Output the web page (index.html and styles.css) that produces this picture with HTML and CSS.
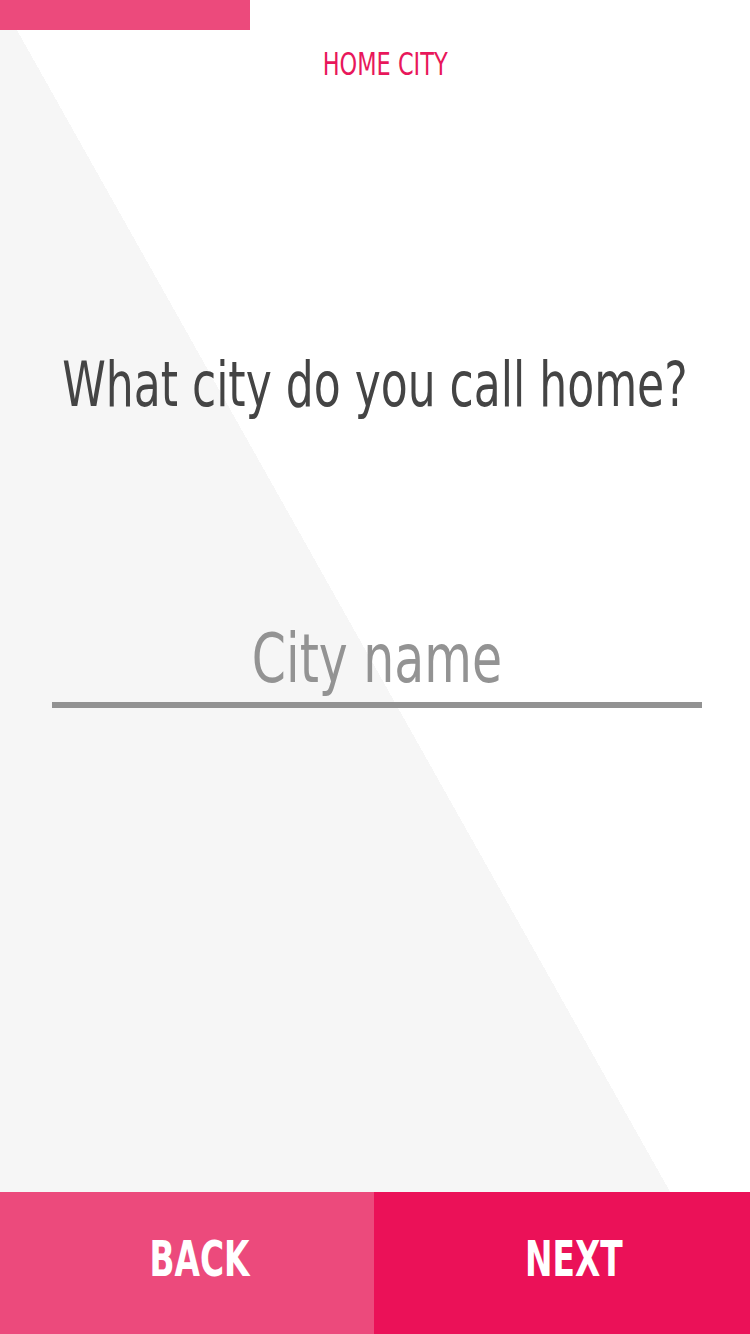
FILE: index.html
```html
<!DOCTYPE html>
<html lang="en">
<head>
<meta charset="utf-8">
<title>Home city</title>
<link rel="stylesheet" href="styles.css">
</head>
<body>
<div class="screen">
  <div class="progress"><div class="progress-fill"></div></div>
  <header class="title"><span class="narrow narrow-title">HOME CITY</span></header>
  <main class="content">
    <h1 class="question"><span class="narrow narrow-question">What city do you call home?</span></h1>
    <div class="field">
      <input class="field-input" type="text" placeholder="City name">
    </div>
  </main>
  <footer class="actions">
    <button class="btn btn-back" type="button"><span class="narrow narrow-btn">BACK</span></button>
    <button class="btn btn-next" type="button"><span class="narrow narrow-btn">NEXT</span></button>
  </footer>
</div>
</body>
</html>
```

FILE: styles.css
```css
html, body {
  margin: 0;
  padding: 0;
}
body {
  width: 750px;
  height: 1334px;
  overflow: hidden;
  background: linear-gradient(to top right, #f6f6f6 50%, #ffffff 50%);
  font-family: "DejaVu Sans Condensed", "DejaVu Sans", sans-serif;
}
.screen {
  height: 1334px;
  display: flex;
  flex-direction: column;
}
.narrow {
  display: inline-block;
  white-space: nowrap;
  transform-origin: center center;
}
.narrow-title { transform: scaleX(0.78); }
.narrow-question { transform: scaleX(0.79); }
.narrow-btn { transform: scaleX(0.73); }

.progress {
  height: 30px;
}
.progress-fill {
  width: 250px;
  height: 30px;
  background: #ec4a7c;
}
.title {
  margin-top: 14px;
  padding-left: 20px;
  text-align: center;
  color: #e8175b;
  font-size: 32px;
  line-height: 40px;
  font-weight: 400;
}
.content {
  flex: 1;
  display: flex;
  flex-direction: column;
  align-items: center;
}
.question {
  margin: 261px 0 0;
  color: #444444;
  font-size: 62px;
  line-height: 80px;
  font-weight: 400;
  text-align: center;
  white-space: nowrap;
}
.field {
  margin: 191px 0 0 4px;
  width: 650px;
  border-bottom: 6px solid #929292;
  display: flex;
  justify-content: center;
}
.field-input {
  flex: none;
  display: block;
  width: 812px;
  box-sizing: border-box;
  border: 0;
  outline: 0;
  padding: 0;
  background: transparent;
  font-family: inherit;
  font-size: 68px;
  line-height: 86px;
  height: 86px;
  text-align: center;
  color: #444;
  transform: scaleX(0.8);
}
.field-input::placeholder {
  color: #939393;
}
.actions {
  height: 142px;
  display: flex;
}
.btn {
  border: 0;
  margin: 0;
  padding: 0 0 8px 24px;
  color: #ffffff;
  font-family: inherit;
  font-size: 50px;
  font-weight: 700;
  cursor: pointer;
}
.btn-back {
  width: 374px;
  background: #ec4a7c;
}
.btn-next {
  flex: 1;
  background: #eb1158;
}
```
